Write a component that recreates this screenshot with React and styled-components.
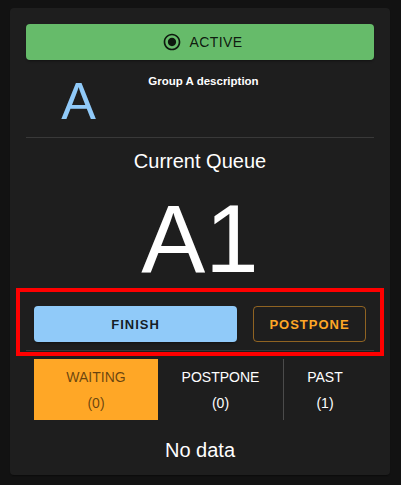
import React from 'react'
import styled, { createGlobalStyle } from "styled-components"

const GlobalStyle = createGlobalStyle`
	body {
		margin: 0;
		background-color: #121212;
		font-family: "Liberation Sans", Arial, sans-serif;
	}
`

const Page = styled.div`
	padding: 8px 11px 9px 10px;
`

const Card = styled.div`
	background-color: #1e1e1e;
	border-radius: 4px;
	padding: 16px 16px 10px;
	color: #ffffff;
	box-shadow: 0 2px 1px -1px rgba(0,0,0,0.2), 0 1px 1px 0 rgba(0,0,0,0.14);
`

const StatusButton = styled.div`
	height: 36px;
	display: flex;
	align-items: center;
	justify-content: center;
	gap: 8px;
	background-color: #66bb6a;
	border-radius: 4px;
	color: rgba(0, 0, 0, 0.87);
	font-size: 14px;
	letter-spacing: 0.4px;
	box-shadow: 0 3px 1px -2px rgba(0,0,0,0.2), 0 2px 2px 0 rgba(0,0,0,0.14);
	padding-left: 4px;
`

const GroupRow = styled.div`
	display: grid;
	grid-template-columns: 105px 145px 1fr;
	margin-top: 10px;
`

const GroupLetter = styled.div`
	text-align: center;
	font-size: 52px;
	line-height: 1.2;
	color: #90caf9;
`

const GroupDescription = styled.div`
	text-align: center;
	font-size: 11.5px;
	font-weight: 700;
	line-height: 18px;
	padding-top: 2px;
`

const Divider = styled.hr`
	border: none;
	height: 1px;
	background-color: rgba(255, 255, 255, 0.12);
	margin: ${p => p.$top || 0}px 0 0;
`

const Heading = styled.div`
	text-align: center;
	font-size: 20px;
	line-height: 30px;
	margin-top: 8px;
`

const QueueNumber = styled.div`
	text-align: center;
	font-size: 96px;
	line-height: 1;
	margin-top: 15px;
`

const Highlight = styled.div`
	border: 4px solid #ff0000;
	margin: 1px -10px 0;
	padding: 0 6px 1px;
`

const Actions = styled.div`
	display: flex;
	gap: 16px;
	padding: 14px 8px 8px;
`

const ActionButton = styled.button`
	height: 36px;
	border-radius: 4px;
	font-family: inherit;
	font-size: 13px;
	font-weight: 700;
	letter-spacing: 1px;
	cursor: pointer;
	${p => p.$primary ? `
		flex: 1;
		background-color: #90caf9;
		border: none;
		color: rgba(0, 0, 0, 0.87);
		box-shadow: 0 3px 1px -2px rgba(0,0,0,0.2), 0 2px 2px 0 rgba(0,0,0,0.14);
	` : `
		width: 113px;
		background-color: transparent;
		border: 1px solid rgba(255, 167, 38, 0.5);
		color: #ffa726;
	`}
`

const Tabs = styled.div`
	display: flex;
	margin: 3px 8px 0;
`

const Tab = styled.div`
	width: ${p => p.$width}px;
	height: 61px;
	box-sizing: border-box;
	padding-top: 5px;
	text-align: center;
	font-size: 14px;
	line-height: 26px;
	background-color: ${p => p.$active ? "#ffa726" : "transparent"};
	color: ${p => p.$active ? "rgba(0, 0, 0, 0.6)" : "#ffffff"};
	border-left: ${p => p.$separated ? "1px solid rgba(255, 255, 255, 0.2)" : "none"};
`

const Empty = styled.div`
	text-align: center;
	font-size: 20px;
	line-height: 30px;
	margin-top: 15px;
`

function RadioChecked() {
	return (
		<svg width="20" height="20" viewBox="0 0 24 24" fill="currentColor">
			<path d="M12 7c-2.76 0-5 2.24-5 5s2.24 5 5 5 5-2.24 5-5-2.24-5-5-5zm0-5C6.48 2 2 6.48 2 12s4.48 10 10 10 10-4.48 10-10S17.52 2 12 2zm0 18c-4.42 0-8-3.58-8-8s3.58-8 8-8 8 3.58 8 8-3.58 8-8 8z" />
		</svg>
	)
}

const tabs = [
	{ label: "WAITING", count: 0, width: 124, active: true },
	{ label: "POSTPONE", count: 0, width: 125 },
	{ label: "PAST", count: 1, width: 83, separated: true },
]

function App() {
	return (
		<Page>
			<GlobalStyle />
			<Card>
				<StatusButton>
					<RadioChecked />
					ACTIVE
				</StatusButton>
				<GroupRow>
					<GroupLetter>A</GroupLetter>
					<GroupDescription>Group A description</GroupDescription>
				</GroupRow>
				<Divider $top={5} />
				<Heading>Current Queue</Heading>
				<QueueNumber>A1</QueueNumber>
				<Highlight>
					<Actions>
						<ActionButton $primary>FINISH</ActionButton>
						<ActionButton>POSTPONE</ActionButton>
					</Actions>
					<Divider />
				</Highlight>
				<Tabs>
					{tabs.map(tab => (
						<Tab key={tab.label} $width={tab.width} $active={tab.active} $separated={tab.separated}>
							<div>{tab.label}</div>
							<div>({tab.count})</div>
						</Tab>
					))}
				</Tabs>
				<Empty>No data</Empty>
			</Card>
		</Page>
	)
}

export default App
